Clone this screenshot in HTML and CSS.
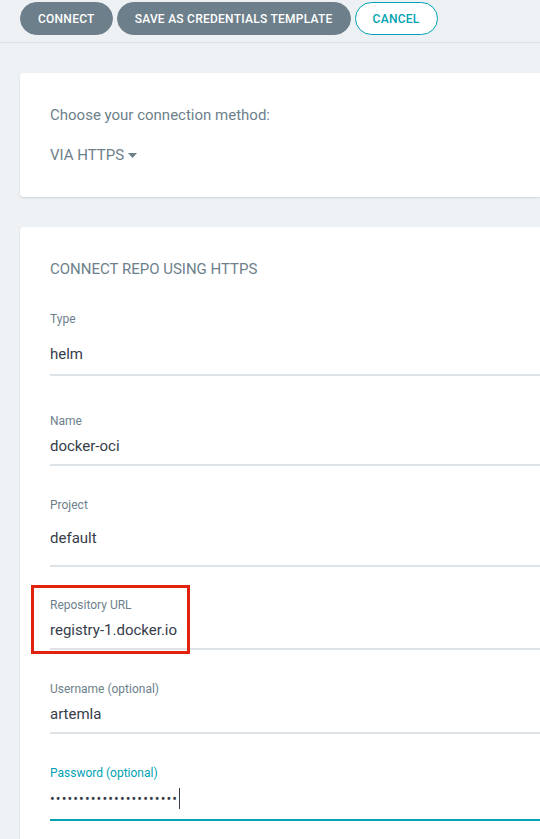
FILE: index.html
```html
<!DOCTYPE html>
<html lang="en">
<head>
    <meta charset="UTF-8">
    <meta name="viewport" content="width=device-width, initial-scale=1.0">
    <title>Connect Repo</title>
    <link rel="stylesheet" href="styles.css">
</head>
<body>
    <div class="toolbar">
        <button class="btn">Connect</button>
        <button class="btn">Save as credentials template</button>
        <button class="btn btn-outline">Cancel</button>
    </div>

    <div class="content">
        <div class="card card-method">
            <p class="card-text">Choose your connection method:</p>
            <div class="dropdown">
                VIA HTTPS
                <svg width="9" height="5" viewBox="0 0 9 5"><path d="M0 0h9L4.5 5z" fill="#6d7f8b"/></svg>
            </div>
        </div>

        <div class="card card-form">
            <h2 class="card-title">Connect repo using HTTPS</h2>

            <div class="field field-type">
                <label class="field-label">Type</label>
                <div class="field-input">helm</div>
            </div>
            <div class="field field-after-select">
                <label class="field-label">Name</label>
                <div class="field-input">docker-oci</div>
            </div>
            <div class="field field-project">
                <label class="field-label">Project</label>
                <div class="field-input">default</div>
            </div>
            <div class="field field-after-select-sm">
                <div class="highlight"></div>
                <label class="field-label">Repository URL</label>
                <div class="field-input">registry-1.docker.io</div>
            </div>
            <div class="field">
                <label class="field-label">Username (optional)</label>
                <div class="field-input">artemla</div>
            </div>
            <div class="field field-focus">
                <label class="field-label">Password (optional)</label>
                <div class="field-input"><span class="dots">••••••••••••••••••••••</span><span class="caret"></span></div>
            </div>
        </div>
    </div>
</body>
</html>
```

FILE: styles.css
```css
body {
    margin: 0;
    font-family: Roboto, "Noto Sans", sans-serif;
    background-color: #eef1f4;
    overflow: hidden;
}
.toolbar {
    display: flex;
    gap: 4px;
    padding: 2px 20px 7px;
    border-bottom: 1px solid #dce2e7;
}
.btn {
    height: 33px;
    padding: 0 17px;
    border: 1px solid #6d7f8b;
    border-radius: 17px;
    background: #6d7f8b;
    color: #fff;
    font-family: inherit;
    font-size: 12px;
    font-weight: 500;
    letter-spacing: 0.25px;
    text-transform: uppercase;
    cursor: pointer;
}
.btn-outline {
    background: #fff;
    color: #00a2b3;
    border-color: #00a2b3;
}
.content {
    padding: 30px 0 0 20px;
    display: flex;
    flex-direction: column;
    gap: 30px;
}
.card {
    background: #fff;
    border-radius: 4px 0 0 4px;
    box-shadow: 0 1px 2px rgba(0, 0, 0, 0.12);
    padding: 32px 0 32px 30px;
}
.card-text {
    margin: 0;
    font-size: 15px;
    line-height: 20px;
    color: #6d7f8b;
}
.dropdown {
    margin-top: 20px;
    font-size: 15px;
    line-height: 20px;
    color: #6d7f8b;
    display: flex;
    align-items: center;
    gap: 4px;
}
.card-title {
    margin: 0;
    font-size: 15px;
    font-weight: 400;
    line-height: 20px;
    color: #6d7f8b;
    text-transform: uppercase;
}
.field {
    position: relative;
    margin-top: 32px;
}
.field-label {
    display: block;
    font-size: 12px;
    line-height: 14px;
    color: #6d7f8b;
}
.field-input {
    margin-top: 8px;
    padding-bottom: 8px;
    font-size: 15px;
    line-height: 20px;
    color: #363c4a;
    border-bottom: 2px solid #dee3e8;
    display: flex;
    align-items: center;
}
.field-type {
    margin-top: 33px;
}
.field-type .field-input {
    margin-top: 18px;
    padding-bottom: 10px;
}
.field-after-select {
    margin-top: 38px;
}
.field-after-select-sm {
    margin-top: 31px;
}
.field-project .field-input {
    margin-top: 16px;
    padding-bottom: 17px;
}
.field-focus .field-label {
    color: #00a2b3;
}
.field-focus .field-input {
    border-bottom-color: #00a2b3;
    padding-bottom: 10px;
}
.dots {
    font-size: 14px;
    letter-spacing: 1.1px;
}
.caret {
    display: inline-block;
    width: 1px;
    height: 21px;
    margin-left: 1px;
    background: #363c4a;
}
.highlight {
    position: absolute;
    left: -19px;
    top: -13px;
    width: 153px;
    height: 63px;
    border: 3px solid #e0220f;
}
```
